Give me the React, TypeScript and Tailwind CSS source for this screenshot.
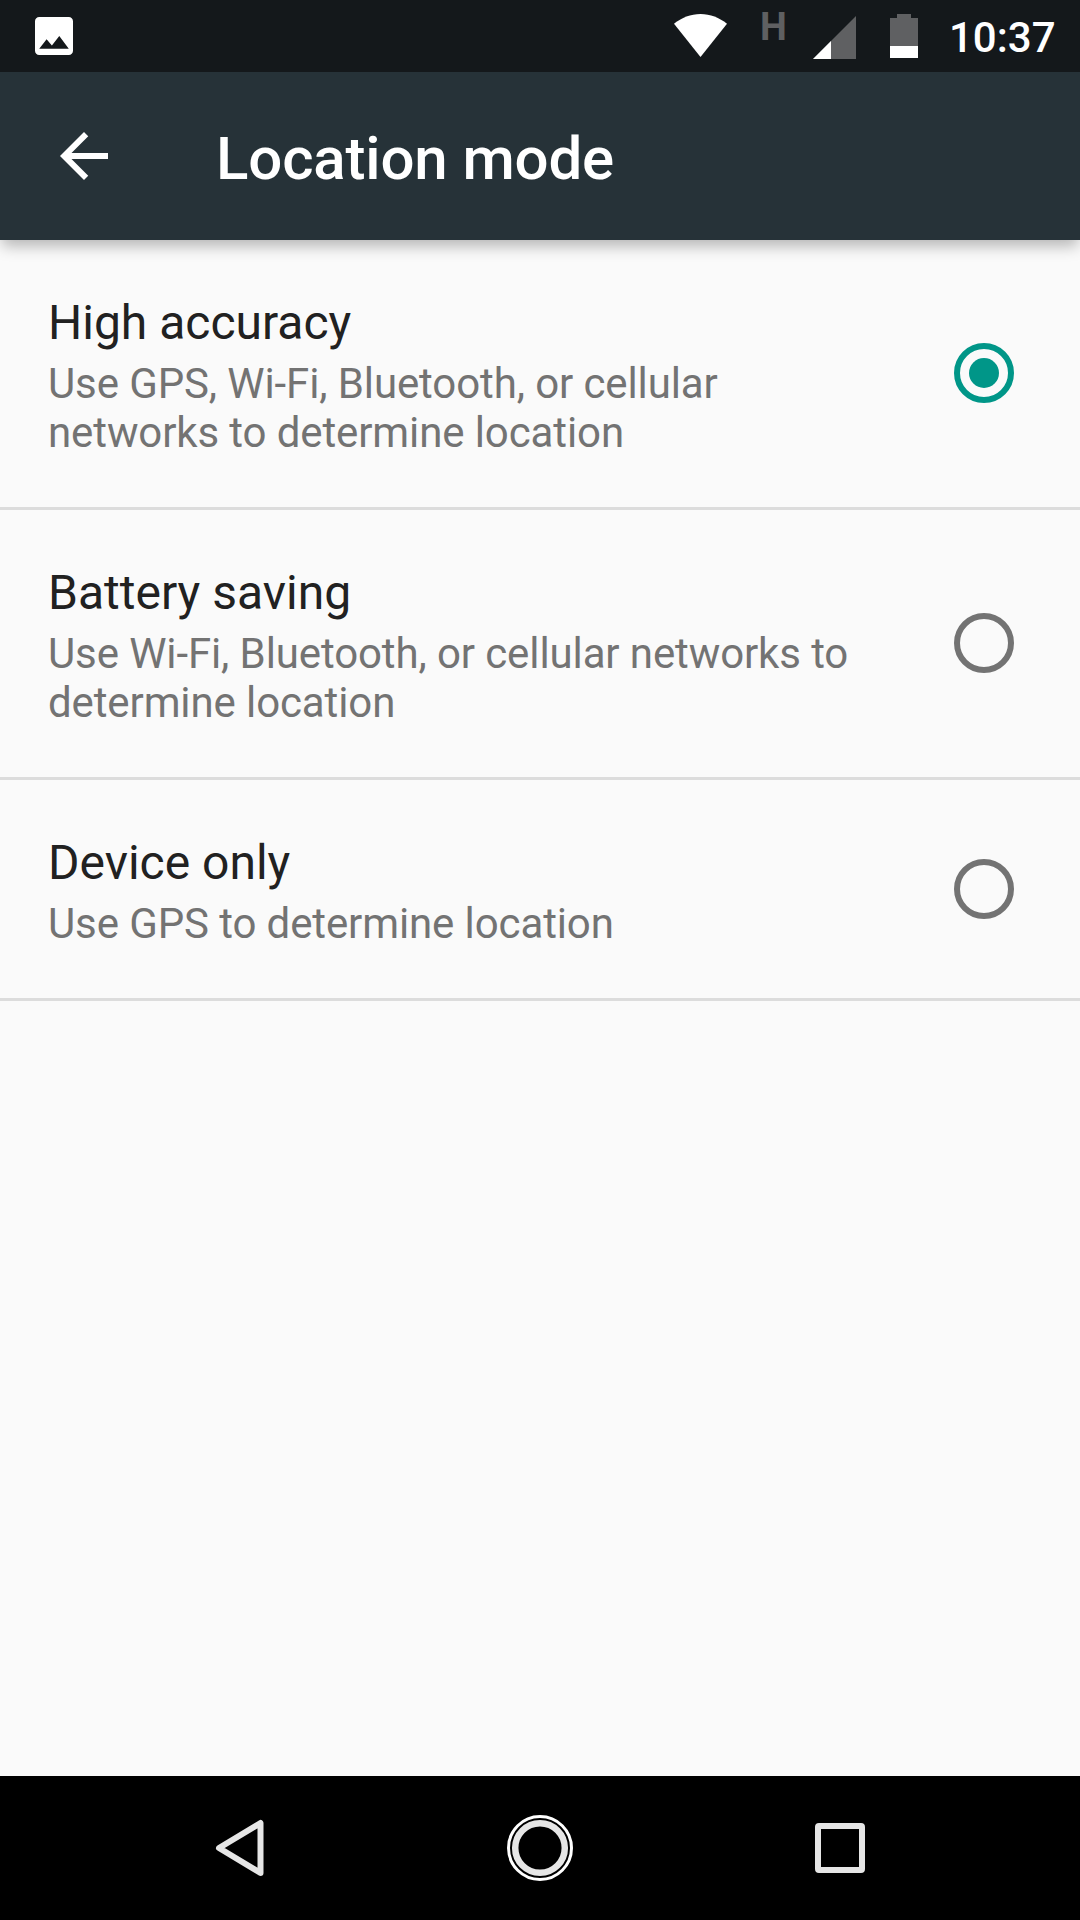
import { useState } from 'react';

interface LocationMode {
  id: string;
  title: string;
  summary: string;
}

const MODES: LocationMode[] = [
  {
    id: 'high',
    title: 'High accuracy',
    summary: 'Use GPS, Wi-Fi, Bluetooth, or cellular networks to determine location',
  },
  {
    id: 'battery',
    title: 'Battery saving',
    summary: 'Use Wi-Fi, Bluetooth, or cellular networks to determine location',
  },
  {
    id: 'device',
    title: 'Device only',
    summary: 'Use GPS to determine location',
  },
];

function StatusBar() {
  return (
    <div className="relative z-20 flex h-[72px] shrink-0 items-start bg-[#14181b] pl-[35px] text-white">
      <svg className="mt-[17px] h-[38px] w-[38px]" viewBox="3 3 18 18" fill="currentColor">
        <path d="M21 19V5c0-1.1-.9-2-2-2H5c-1.1 0-2 .9-2 2v14c0 1.1.9 2 2 2h14c1.1 0 2-.9 2-2zM8.5 13.5l2.5 3.01L14.5 12l4.5 6H5l3.5-4.5z" />
      </svg>

      {/* Wi-Fi */}
      <svg className="mt-[14px] ml-[601px] h-[43px] w-[53px]" viewBox="0 0 53 43" fill="currentColor">
        <path d="M0 9.8C7.6 3.6 16.8 0 26.5 0S45.4 3.6 53 9.8L26.5 43z" />
      </svg>

      {/* Mobile network: type and strength */}
      <span className="mt-[5px] ml-[33px] w-[28px] text-[38px] leading-[45px] font-bold text-[#5f6062]">H</span>
      <svg className="mt-[16px] ml-[25px] h-[43px] w-[43px]" viewBox="0 0 43 43">
        <path d="M0 43L43 0v43z" fill="#5f6062" />
        <path d="M0 43L18 25v18z" fill="#fff" />
      </svg>

      {/* Battery */}
      <svg className="mt-[14px] ml-[34px] h-[44px] w-[28px]" viewBox="0 0 28 44">
        <path d="M7 0h14v4h7v28H0V4h7z" fill="#5f6062" />
        <path d="M0 32h28v12H0z" fill="#fff" />
      </svg>

      <span className="mt-[13px] ml-[31px] text-[42px] leading-[50px] font-medium">10:37</span>
    </div>
  );
}

function AppBar() {
  return (
    <header className="relative z-10 flex h-[168px] shrink-0 items-center bg-[#263238] pl-12 text-white shadow-[0_8px_14px_-2px_rgba(0,0,0,0.28)]">
      <button aria-label="Navigate up">
        <svg className="h-[72px] w-[72px]" viewBox="0 0 24 24" fill="currentColor">
          <path d="M20 11H7.83l5.59-5.59L12 4l-8 8 8 8 1.41-1.41L7.83 13H20v-2z" />
        </svg>
      </button>
      <h1 className="mt-[6px] ml-24 text-[60px] leading-[70px] font-medium tracking-[-0.15px]">Location mode</h1>
    </header>
  );
}

interface ModeRowProps {
  mode: LocationMode;
  checked: boolean;
  onSelect: () => void;
}

function ModeRow({ mode, checked, onSelect }: ModeRowProps) {
  return (
    <div
      role="radio"
      aria-checked={checked}
      onClick={onSelect}
      className="flex items-center border-b-[3px] border-[#dcdcdc] pr-[66px] pl-12"
    >
      <div className="w-[840px] pt-[55px] pb-[50px]">
        <h2 className="text-[48px] leading-[56px] text-[#212121]">{mode.title}</h2>
        <p className="mt-[8px] text-[42px] leading-[49px] tracking-[-0.11px] text-[#737373]">{mode.summary}</p>
      </div>
      <svg
        className={`-mt-[0.5px] ml-auto h-[60px] w-[60px] ${checked ? 'text-[#009688]' : 'text-[#737373]'}`}
        viewBox="0 0 60 60"
      >
        <circle cx="30" cy="30" r="27" fill="none" stroke="currentColor" strokeWidth="6" />
        {checked && <circle cx="30" cy="30" r="15" fill="currentColor" />}
      </svg>
    </div>
  );
}

function NavigationBar() {
  return (
    <nav className="flex h-36 shrink-0 items-center justify-center gap-[234px] bg-black text-[#e6e6e6]">
      <button aria-label="Back">
        <svg className="h-[66px] w-[66px]" viewBox="0 0 66 66" fill="none">
          <path d="M12 33L53.5 8v50z" stroke="currentColor" strokeWidth="6" strokeLinejoin="round" />
        </svg>
      </button>
      <button aria-label="Home">
        <svg className="h-[66px] w-[66px]" viewBox="0 0 66 66" fill="none">
          <circle cx="33" cy="33" r="31.5" stroke="#fff" strokeWidth="3" />
          <circle cx="33" cy="33" r="24.8" stroke="currentColor" strokeWidth="6.5" />
        </svg>
      </button>
      <button aria-label="Overview">
        <svg className="h-[66px] w-[66px]" viewBox="0 0 66 66" fill="none">
          <path
            fillRule="evenodd"
            d="M12 8h42a4 4 0 0 1 4 4v42a4 4 0 0 1-4 4H12a4 4 0 0 1-4-4V12a4 4 0 0 1 4-4zm2 6v38h38V14z"
            fill="currentColor"
          />
        </svg>
      </button>
    </nav>
  );
}

export default function App() {
  const [selected, setSelected] = useState('high');

  return (
    <div className="flex h-[1920px] w-[1080px] flex-col overflow-hidden bg-[#fafafa] font-['Roboto',sans-serif]">
      <StatusBar />
      <AppBar />
      <main role="radiogroup" className="flex-1">
        {MODES.map((mode) => (
          <ModeRow
            key={mode.id}
            mode={mode}
            checked={mode.id === selected}
            onSelect={() => setSelected(mode.id)}
          />
        ))}
      </main>
      <NavigationBar />
    </div>
  );
}
